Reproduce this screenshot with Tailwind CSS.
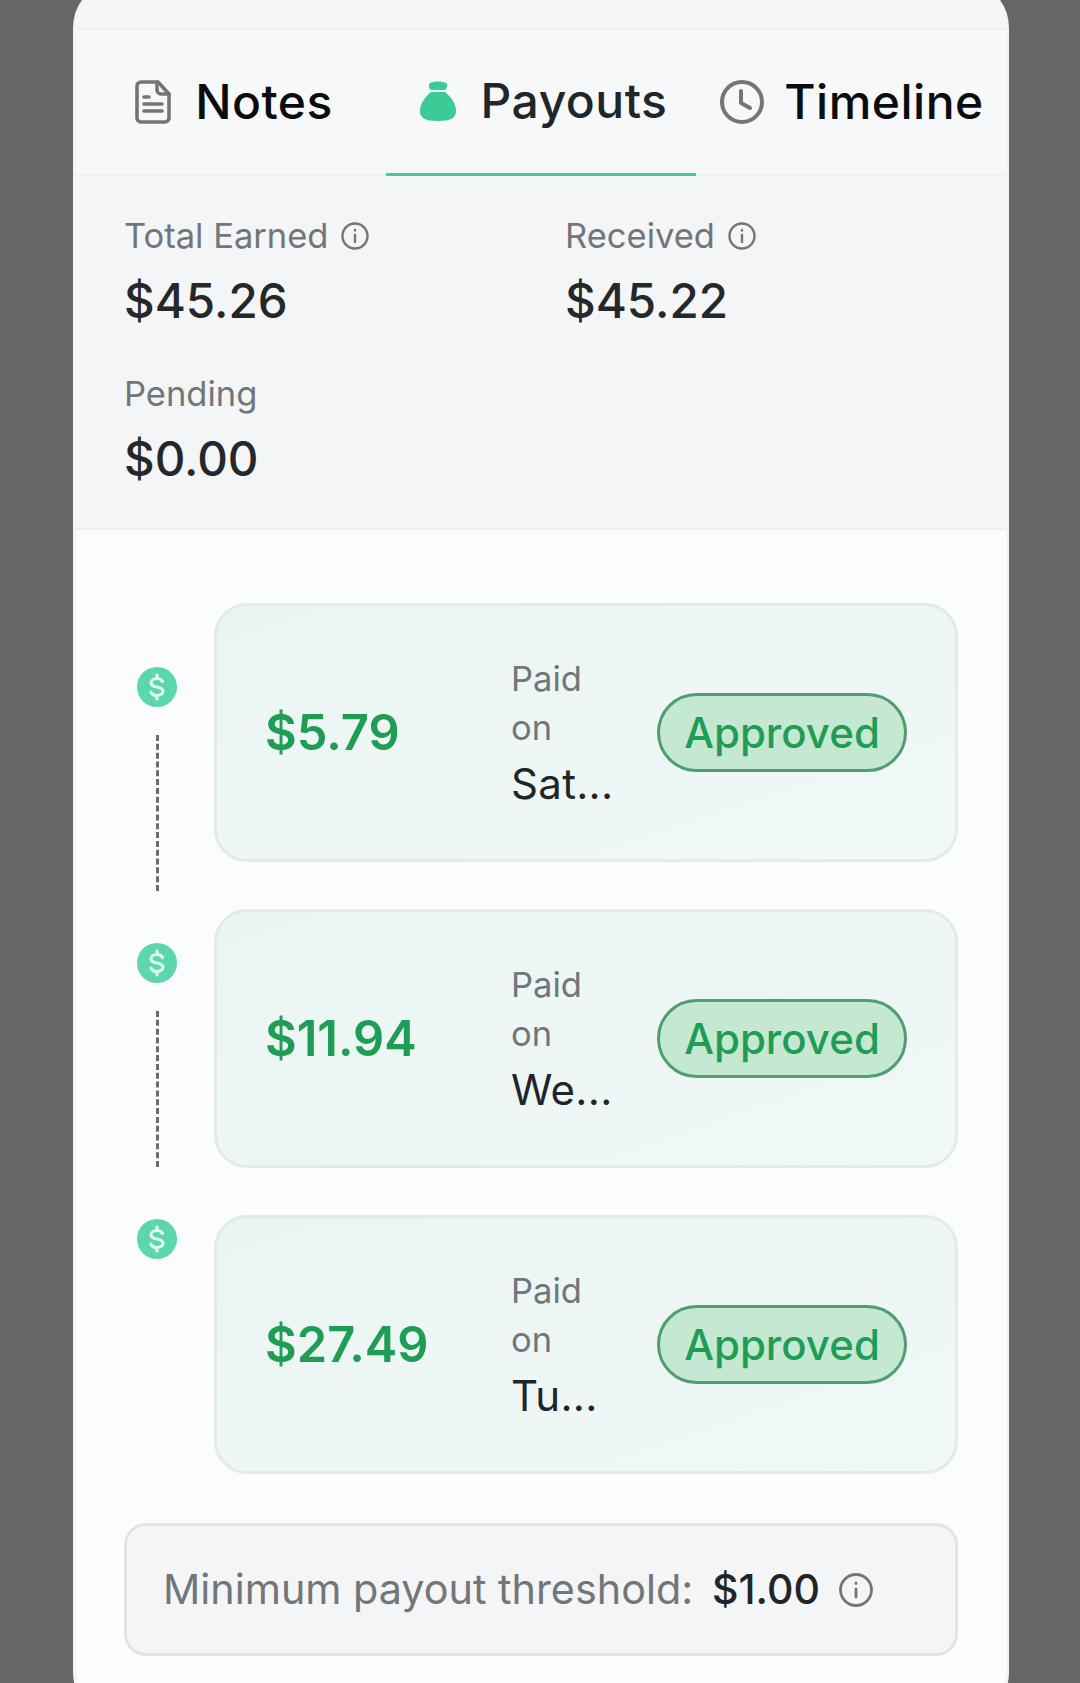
<!DOCTYPE html>
<html lang="en">
<head>
    <meta charset="UTF-8">
    <meta name="viewport" content="width=device-width, initial-scale=1.0">
    <script src="https://cdn.jsdelivr.net/npm/@tailwindcss/browser@4"></script>
    <title>Payouts</title>
</head>
<body class="h-[1683px] overflow-hidden bg-[#666666] font-['Inter',sans-serif]">
    <div class="ml-[73px] -mt-[20px] w-[936px] h-[1740px] overflow-hidden rounded-[48px] border-[3px] border-[#f4f4f4] bg-[#fbfcfe]">
        <div class="h-[45px] bg-[#f4f6f8] border-b-[2px] border-[#f0f0ee] box-content"></div>

        <!-- tabs -->
        <div class="grid grid-cols-3 h-[146px] bg-[#f6f8fa] border-b-[2px] border-[#f1f1ef]">
            <div class="flex items-center justify-center gap-[24px] h-[146px] pl-[6px] pb-[2px]">
                <svg class="w-[36px] h-[44px]" viewBox="0 0 36 44" fill="none" stroke="#757575" stroke-width="3.600" stroke-linejoin="round" stroke-linecap="round">
                    <path d="M6 2h17l11 12v24a4 4 0 0 1-4 4H6a4 4 0 0 1-4-4V6a4 4 0 0 1 4-4z"/>
                    <path d="M22 2v8a4 4 0 0 0 4 4h8"/>
                    <path d="M9 17h5M9 24h18M9 31h18"/>
                </svg>
                <span class="text-[48px] leading-none font-medium tracking-[0.5px] text-[#0b0c0d]">Notes</span>
            </div>
            <div class="flex items-center justify-center gap-[25px] h-[146px] pl-[5px] pb-[2px] border-b-[3px] border-[#3ecf9c]">
                <svg class="w-[36px] h-[40px]" viewBox="0 0 36 40" fill="#3ccb96">
                    <path d="M10 2c4-2 12-2 16 0 2 1 1 6-1 7H11C9 8 8 3 10 2z"/>
                    <path d="M11 11h14c5 4 11 11 11 19 0 7-5 10-18 10S0 37 0 30c0-8 6-15 11-19z"/>
                </svg>
                <span class="text-[48px] leading-none font-medium tracking-[0.5px] text-[#21262a]">Payouts</span>
            </div>
            <div class="flex items-center justify-center gap-[20px] h-[146px] pl-[2px] pb-[2px]">
                <svg class="w-[44px] h-[44px]" viewBox="0 0 44 44" fill="none" stroke="#757575" stroke-width="4" stroke-linecap="round" stroke-linejoin="round">
                    <circle cx="22" cy="22" r="20"/>
                    <path d="M21 11v12l9 5"/>
                </svg>
                <span class="text-[48px] leading-none font-medium tracking-[0.5px] text-[#0b0c0d]">Timeline</span>
            </div>
        </div>

        <!-- totals -->
        <div class="h-[354px] bg-[#f4f5f6] border-b-[2px] border-[#f3eeec] pl-[48px] pt-[39px]">
            <div class="grid grid-cols-[441px_1fr] gap-y-[47px]">
                <div>
                    <div class="flex items-center gap-[13px] h-[42px] text-[34.500px] text-[#737679]">
                        Total Earned
                        <svg class="w-[28px] h-[28px]" viewBox="0 0 28 28" fill="none" stroke="#737679" stroke-width="2.400" stroke-linecap="round"><circle cx="14" cy="14" r="12.500"/><path d="M14 13v7M14 8v.6"/></svg>
                    </div>
                    <div class="mt-[19px] text-[47.500px] leading-[50px] font-medium text-[#25282b]">$45.26</div>
                </div>
                <div>
                    <div class="flex items-center gap-[13px] h-[42px] text-[34.500px] text-[#737679]">
                        Received
                        <svg class="w-[28px] h-[28px]" viewBox="0 0 28 28" fill="none" stroke="#737679" stroke-width="2.400" stroke-linecap="round"><circle cx="14" cy="14" r="12.500"/><path d="M14 13v7M14 8v.6"/></svg>
                    </div>
                    <div class="mt-[19px] text-[47.500px] leading-[50px] font-medium text-[#25282b]">$45.22</div>
                </div>
                <div class="col-span-2">
                    <div class="flex items-center h-[42px] text-[34.500px] text-[#737679]">Pending</div>
                    <div class="mt-[19px] text-[47.500px] leading-[50px] font-medium text-[#25282b]">$0.00</div>
                </div>
            </div>
        </div>

        <!-- payout list -->
        <div class="pl-[48px] pr-[48px] pt-[73px]">
            <div class="flex">
                <div class="w-[90px] shrink-0 pl-[13px] pt-[64px]">
                    <div class="flex flex-col items-center w-[40px]">
                        <svg class="w-[40px] h-[40px]" viewBox="0 0 40 40"><circle cx="20" cy="20" r="20" fill="#5cd6ac"/><path d="M25.500 14.500c-1-2-3-3-5.500-3-3.500 0-6 1.800-6 4.400 0 5.600 12 2.600 12 8.200 0 2.700-2.700 4.400-6 4.400-2.700 0-5-1.200-6-3.300M20 8v3.500M20 28.500V32" fill="none" stroke="#e0f7ee" stroke-width="3.200" stroke-linecap="round"/></svg>
                        <div class="mt-[28px] h-[156px] border-l-[3px] border-dashed border-[#6b6b70]"></div>
                        <svg class="mt-[52px] w-[40px] h-[40px]" viewBox="0 0 40 40"><circle cx="20" cy="20" r="20" fill="#5cd6ac"/><path d="M25.500 14.500c-1-2-3-3-5.500-3-3.500 0-6 1.800-6 4.400 0 5.600 12 2.600 12 8.200 0 2.700-2.700 4.400-6 4.400-2.700 0-5-1.200-6-3.300M20 8v3.500M20 28.500V32" fill="none" stroke="#e0f7ee" stroke-width="3.200" stroke-linecap="round"/></svg>
                        <div class="mt-[28px] h-[156px] border-l-[3px] border-dashed border-[#6b6b70]"></div>
                        <svg class="mt-[52px] w-[40px] h-[40px]" viewBox="0 0 40 40"><circle cx="20" cy="20" r="20" fill="#5cd6ac"/><path d="M25.500 14.500c-1-2-3-3-5.500-3-3.500 0-6 1.800-6 4.400 0 5.600 12 2.600 12 8.200 0 2.700-2.700 4.400-6 4.400-2.700 0-5-1.200-6-3.300M20 8v3.500M20 28.500V32" fill="none" stroke="#e0f7ee" stroke-width="3.200" stroke-linecap="round"/></svg>
                    </div>
                </div>
                <div class="flex-1 flex flex-col gap-[47px]">
                    <div class="h-[259px] flex items-center pl-[48px] pr-[48px] rounded-[33px] border-[3px] border-[#dfece8] bg-linear-to-br from-[#eaf5f2] to-[#f1f8f8]">
                        <div class="w-[246px] text-[48.800px] font-semibold text-[#1f9d55]">$5.79</div>
                        <div class="w-[144px]">
                            <div class="w-[90px] text-[34.500px] leading-[49px] text-[#71767a]">Paid on</div>
                            <div class="mt-[3px] text-[42px] leading-[57px] tracking-[0.3px] text-[#212528]">Sat...</div>
                        </div>
                        <div class="ml-auto w-[250px] h-[79px] flex items-center justify-center rounded-full border-[3px] border-[#4f9e70] bg-[#c5e8d3] text-[42px] font-medium text-[#1f9d55]">Approved</div>
                    </div>
                    <div class="h-[259px] flex items-center pl-[48px] pr-[48px] rounded-[33px] border-[3px] border-[#dfece8] bg-linear-to-br from-[#eaf5f2] to-[#f1f8f8]">
                        <div class="w-[246px] text-[48.800px] font-semibold text-[#1f9d55]">$11.94</div>
                        <div class="w-[144px]">
                            <div class="w-[90px] text-[34.500px] leading-[49px] text-[#71767a]">Paid on</div>
                            <div class="mt-[3px] text-[42px] leading-[57px] tracking-[0.3px] text-[#212528]">We...</div>
                        </div>
                        <div class="ml-auto w-[250px] h-[79px] flex items-center justify-center rounded-full border-[3px] border-[#4f9e70] bg-[#c5e8d3] text-[42px] font-medium text-[#1f9d55]">Approved</div>
                    </div>
                    <div class="h-[259px] flex items-center pl-[48px] pr-[48px] rounded-[33px] border-[3px] border-[#dfece8] bg-linear-to-br from-[#eaf5f2] to-[#f1f8f8]">
                        <div class="w-[246px] text-[48.800px] font-semibold text-[#1f9d55]">$27.49</div>
                        <div class="w-[144px]">
                            <div class="w-[90px] text-[34.500px] leading-[49px] text-[#71767a]">Paid on</div>
                            <div class="mt-[3px] text-[42px] leading-[57px] tracking-[0.3px] text-[#212528]">Tu...</div>
                        </div>
                        <div class="ml-auto w-[250px] h-[79px] flex items-center justify-center rounded-full border-[3px] border-[#4f9e70] bg-[#c5e8d3] text-[42px] font-medium text-[#1f9d55]">Approved</div>
                    </div>
                </div>
            </div>

            <div class="mt-[49px] h-[133px] flex items-center pl-[36px] rounded-[22px] border-[3px] border-[#e1e3e6] bg-[#f4f5f7]">
                <span class="text-[41.300px] text-[#737679]">Minimum payout threshold:</span>
                <span class="ml-[19px] text-[41px] font-medium text-[#212528]">$1.00</span>
                <svg class="ml-[19px] w-[34px] h-[34px]" viewBox="0 0 34 34" fill="none" stroke="#737679" stroke-width="2.800" stroke-linecap="round"><circle cx="17" cy="17" r="15.500"/><path d="M17 16v8M17 10v.6"/></svg>
            </div>
        </div>
    </div>
</body>
</html>
